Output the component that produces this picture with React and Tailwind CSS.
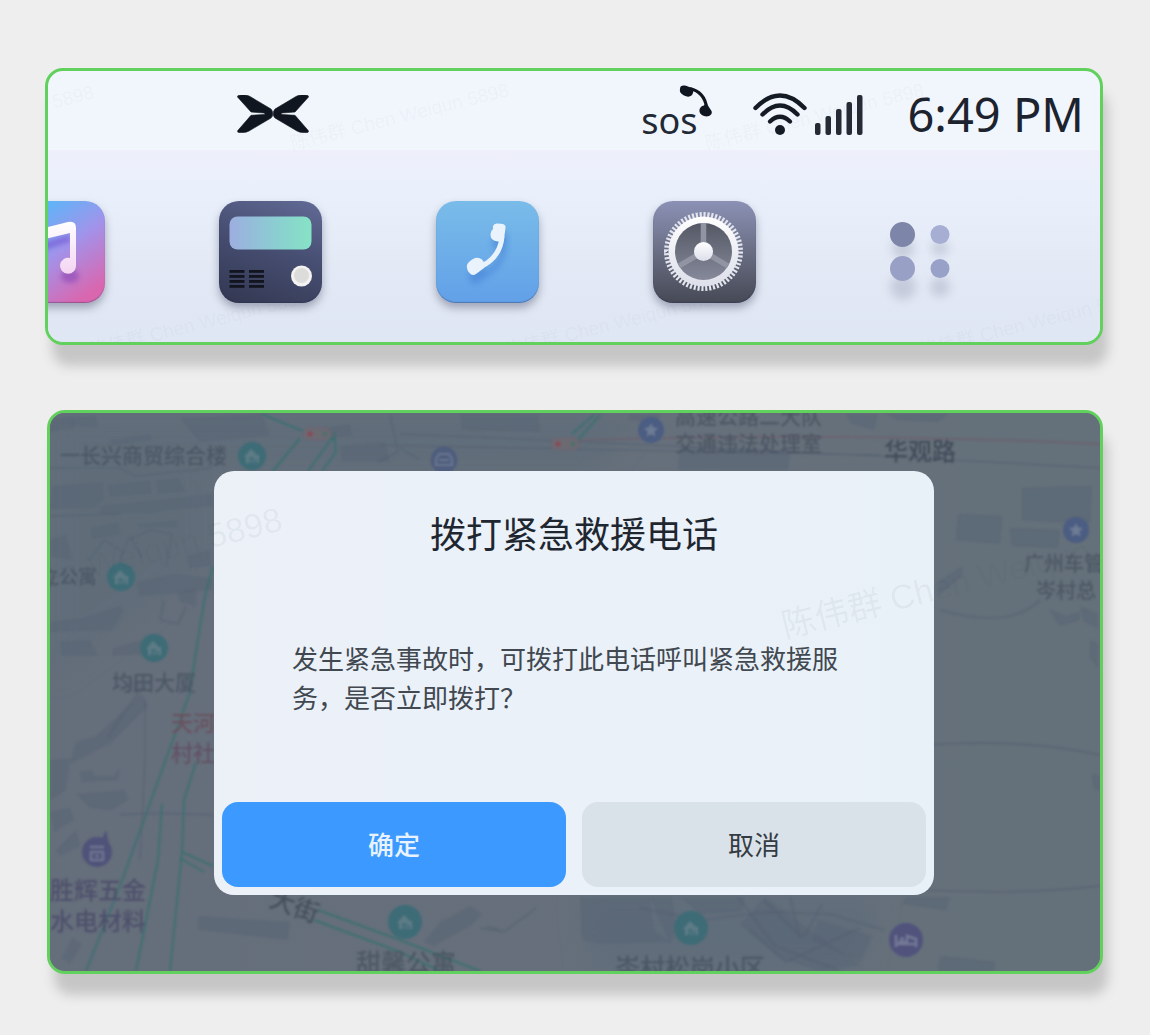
import React from "react";

const WATERMARK = "陈伟群 Chen Weiqun 5898";
const WM_FONT = '"Liberation Sans", "Noto Sans CJK SC", sans-serif';
const CJK = '"Noto Sans CJK SC", sans-serif';

const WING = "M.5 2Q0 0 4 0H8Q11 .3 13 1.500L34 14Q35.800 16 35.800 18.700Q35.800 21.500 34 23L12 36Q9 37.500 6 37.500H2Q0 37.500 .8 35.500L14 20.300L27 19.500Q29 18.700 27 18L14 17Z";

function BrandLogo() {
  return (
    <svg viewBox="0 0 72 38" className="h-[38px] w-[72px]" fill="#10161f" stroke="#10161f" strokeWidth=".6" strokeLinejoin="round" aria-label="XPENG" role="img">
      <path d={WING} />
      <path d={WING} transform="translate(72 0) scale(-1 1)" />
    </svg>
  );
}

function SosHandset() {
  return (
    <svg viewBox="0 0 34 34" className="absolute -right-[15px] -top-[1px] h-[34px] w-[34px]" fill="#10161f" aria-hidden="true">
      <path d="M12 4.500C22 7 27 13 28.500 23" fill="none" stroke="#10161f" strokeWidth="3.200" />
      <path d="M2 5C2 1.500 4.500 1 8 1.800L14 4C16 6 15.500 9.500 13.500 11.500C11.500 13.300 8 13 4.500 10.500C2 9 1.500 7 2 5Z" />
      <path d="M28 18.500L33.500 27C34.500 29.500 33 31.500 30 32.300C26 33 22 30.500 21.500 27.500C21 24.500 23 22 26 21.500Z" />
    </svg>
  );
}

function WifiIcon() {
  return (
    <svg viewBox="0 0 54 42" className="h-[42px] w-[54px]" fill="none" stroke="#151b25" strokeWidth="4.400" strokeLinecap="round" aria-hidden="true">
      <path d="M2.500 15Q27-10 51.500 15" />
      <path d="M9.500 21.500Q27 3.500 44.500 21.500" />
      <path d="M17 28.500Q27 19 37 28.500" />
      <circle cx="27" cy="37" r="5" fill="#151b25" stroke="none" />
    </svg>
  );
}

function SignalIcon() {
  return (
    <svg viewBox="0 0 48 42" className="h-[42px] w-[48px]" fill="#252b35" aria-hidden="true">
      <rect x="0" y="30" width="5.500" height="12" rx="2" />
      <rect x="10.500" y="23" width="5.500" height="19" rx="2" />
      <rect x="21" y="16" width="5.500" height="26" rx="2" />
      <rect x="31.500" y="9" width="5.500" height="33" rx="2" />
      <rect x="42" y="2" width="5.500" height="40" rx="2" />
    </svg>
  );
}

function MusicArt() {
  return (
    <svg viewBox="0 0 103 102" className="h-full w-full" aria-hidden="true">
      <defs>
        <linearGradient id="noteFill" x1="0" y1="0" x2="0" y2="1">
          <stop offset="0" stopColor="#fff" />
          <stop offset="1" stopColor="#f0c9ee" />
        </linearGradient>
        <filter id="noteBlur"><feGaussianBlur stdDeviation="2.500" /></filter>
      </defs>
      <g filter="url(#noteBlur)">
        <path d="M34 48L68 37" stroke="#7048cf" strokeOpacity=".55" strokeWidth="7" fill="none" />
        <ellipse cx="68" cy="75" rx="9" ry="7" fill="#8a42b4" fillOpacity=".6" />
      </g>
      <path d="M30 30L66 21Q74 19.500 74 27V64A8 8 0 1 1 68 57V32L35 40V78A8 8 0 1 1 29 71Z" fill="url(#noteFill)" />
    </svg>
  );
}

function RadioArt() {
  const rows = [69, 74, 79, 84];
  return (
    <svg viewBox="0 0 103 102" className="h-full w-full" aria-hidden="true">
      <defs>
        <linearGradient id="radioScreen" x1="0" y1="0" x2="1" y2="0">
          <stop offset="0" stopColor="#9daee0" />
          <stop offset=".55" stopColor="#8bcdd2" />
          <stop offset="1" stopColor="#86e3c5" />
        </linearGradient>
      </defs>
      <rect x="10.500" y="15.500" width="82" height="33" rx="8" fill="url(#radioScreen)" />
      {rows.map((y) => (
        <g key={y} fill="#12151f">
          <rect x="10.500" y={y} width="15" height="2.800" />
          <rect x="30" y={y} width="15" height="2.800" />
        </g>
      ))}
      <circle cx="82.500" cy="75" r="10.500" fill="#f3f2f0" />
      <circle cx="82.500" cy="74.500" r="7.500" fill="#dcdcda" />
    </svg>
  );
}

function PhoneShape(props) {
  return (
    <g {...props}>
      <path d="M66 35C65 50 57 60 44 66" fill="none" strokeWidth="5" stroke="currentColor" />
      <path d="M57 25Q58 22 62 22.500L67 23Q70 24 69.500 27L68 38Q67 41 62 40.500Q54 40 54.500 33Q54.500 30 57 28Z" fill="currentColor" />
      <path d="M31 64Q32 61 37 58Q42 55.500 46 58.500Q50 63 48 67L40 73Q37 75 34.500 73Q30 69 31 64Z" fill="currentColor" />
    </g>
  );
}

function PhoneArt() {
  return (
    <svg viewBox="0 0 103 102" className="h-full w-full" aria-hidden="true">
      <defs>
        <filter id="softPhone"><feGaussianBlur stdDeviation="3" /></filter>
      </defs>
      <PhoneShape color="#4a86d8" opacity=".7" transform="translate(2 9)" filter="url(#softPhone)" />
      <PhoneShape color="#eaf3fc" />
    </svg>
  );
}

function SettingsArt() {
  return (
    <svg viewBox="0 0 103 102" className="h-full w-full" aria-hidden="true">
      <defs>
        <linearGradient id="gearRing" x1="0" y1="0" x2="0" y2="1">
          <stop offset="0" stopColor="#fff" />
          <stop offset="1" stopColor="#dddfea" />
        </linearGradient>
        <linearGradient id="gearHole" x1="0" y1="0" x2="0" y2="1">
          <stop offset="0" stopColor="#555864" />
          <stop offset="1" stopColor="#85899a" />
        </linearGradient>
      </defs>
      <circle cx="50.500" cy="50.500" r="36.500" fill="none" stroke="#e3e5ee" strokeWidth="6" pathLength="120" strokeDasharray="1.100 .9" />
      <circle cx="50.500" cy="50.500" r="35" fill="url(#gearRing)" />
      <circle cx="50.500" cy="50.500" r="28.500" fill="url(#gearHole)" />
      <path d="M50.500 50V22M50.500 50.500L26 65M50.500 50.500L75 65" stroke="#9194a2" strokeWidth="5.500" />
      <circle cx="50.500" cy="50.500" r="9.500" fill="url(#gearRing)" />
    </svg>
  );
}

function MoreDots() {
  return (
    <svg viewBox="0 0 103 102" className="h-full w-full overflow-visible" aria-hidden="true">
      <defs>
        <filter id="dotBlur" x="-50%" y="-50%" width="200%" height="200%"><feGaussianBlur stdDeviation="5" /></filter>
      </defs>
      <g fill="#8990a5" opacity=".32" filter="url(#dotBlur)">
        <circle cx="33" cy="47" r="11" /><circle cx="70" cy="47" r="8" />
        <circle cx="33" cy="86" r="13" /><circle cx="70" cy="86" r="10" />
      </g>
      <circle cx="32.500" cy="33.500" r="12.500" fill="#7d85a8" />
      <circle cx="70" cy="33.500" r="9.500" fill="#a6afd3" />
      <circle cx="32.500" cy="67.500" r="12.500" fill="#98a1c5" />
      <circle cx="70" cy="67.500" r="9.500" fill="#98a1c8" />
    </svg>
  );
}

const APPS = [
  { name: "音乐", art: <MusicArt />, tile: "bg-[linear-gradient(145deg,#4fbcfb_12%,#a193ea_52%,#d967b0_88%)]" },
  { name: "收音机", art: <RadioArt />, tile: "bg-[linear-gradient(200deg,#626b96,#474f73_45%,#323750)]" },
  { name: "电话", art: <PhoneArt />, tile: "bg-[linear-gradient(180deg,#79bce9,#62a0e8)]" },
  { name: "设置", art: <SettingsArt />, tile: "bg-[linear-gradient(180deg,#8b91b5,#6a6e84_50%,#464955)]" },
];

function Watermark({ x, y, size, anchor = "start", angle = -14 }) {
  return (
    <text x={x} y={y} fontSize={size} textAnchor={anchor} transform={`rotate(${angle} ${x} ${y})`}>
      {WATERMARK}
    </text>
  );
}

function HomePanel() {
  return (
    <section className="relative -ml-0.5 overflow-hidden rounded-[18px] border-[3px] border-[#62d05c] bg-[#f1f6fd] shadow-[6px_22px_12px_-1px_#c6c6c6]">
      <header className="flex h-[79px] items-center pl-[189px] pr-4 pt-1.5">
        <BrandLogo />
        <div className="ml-auto flex items-center">
          <span className="relative mr-[56px] pt-[14px] font-['Noto_Sans'] text-[36px] leading-[44px] text-[#222934]">
            sos
            <SosHandset />
          </span>
          <WifiIcon />
          <span className="ml-2 mr-11"><SignalIcon /></span>
          <time className="font-['Noto_Sans'] text-[47px] leading-[60px] text-[#1d232e]">6:49 PM</time>
        </div>
      </header>
      <nav className="flex gap-[114px] bg-[linear-gradient(180deg,#eeeffb,#e9f0fb_22%,#e3e9f5_60%,#dfe6f4)] pb-[39px] pt-[51px]">
        {APPS.map((app) => (
          <button
            key={app.name}
            type="button"
            aria-label={app.name}
            className={`h-[102px] w-[103px] shrink-0 rounded-[20px] shadow-[0_5px_9px_rgba(60,66,90,0.4),inset_0_-1px_1px_rgba(40,40,80,0.35)] first:-ml-[46px] ${app.tile}`}
          >
            {app.art}
          </button>
        ))}
        <button type="button" aria-label="更多应用" className="h-[102px] w-[103px] shrink-0"><MoreDots /></button>
      </nav>
      <svg viewBox="48 71 1052 271" preserveAspectRatio="xMinYMin slice" className="pointer-events-none absolute inset-0 h-full w-full" fill="#5c6a70" fillOpacity=".055" fontFamily={WM_FONT} aria-hidden="true">
        <Watermark x={95} y={98} size={19} anchor="end" />
        <Watermark x={292} y={150} size={19} />
        <Watermark x={707} y={150} size={19} />
        <Watermark x={91} y={357} size={19} />
        <Watermark x={506} y={357} size={19} />
        <Watermark x={921} y={357} size={19} />
      </svg>
    </section>
  );
}

const BUILDINGS = [
  "50,420 72,416 74,428 50,432", "72,417 96,416 98,427 72,426", "110,440 150,434 152,440 112,446", "180,418 262,414 270,436 200,442",
  "52,486 103,482 104,500 94,508 50,509", "107,485 150,480 152,494 110,497", "156,480 178,478 186,492 158,494",
  "100,506 155,500 212,494 213,506 170,510 150,514 100,514", "90,528 118,522 121,535 92,539", "136,524 176,520 178,528 140,528",
  "50,540 66,535 72,560 50,556", "136,582 175,574 213,578 213,590 140,596", "178,592 196,588 196,606 180,602",
  "50,622 82,618 120,606 124,610 112,630 50,632", "60,642 90,640 98,656 62,656", "113,648 142,640 148,654 112,656",
  "128,678 142,684 138,694 124,690", "96,736 142,694 148,706 112,742 70,764 76,742", "80,772 92,770 94,776 114,776 120,768 118,780 82,782",
  "50,760 70,758 66,790 50,800", "76,794 124,790 128,800 112,810 90,808", "50,812 70,808 74,820 54,832", "56,850 76,830 80,846 60,856",
  "198,916 290,922 288,940 198,930", "460,414 538,414 540,432 462,430", "340,446 385,442 390,462 342,462",
  "680,446 790,452 788,470 678,470", "630,414 660,414 658,422 628,420", "846,414 878,414 874,430 852,424", "886,414 948,414 938,422 896,420",
  "1022,488 1092,486 1090,524 1022,520", "958,514 1002,516 1000,544 956,540", "1010,528 1060,530 1058,548 1012,546",
  "938,582 963,566 962,576 938,596", "1050,610 1066,616 1080,612 1080,620 1060,626", "1080,606 1098,614 1098,628 1084,622",
  "1090,640 1098,644 1098,668 1090,658", "1092,774 1100,776 1100,792 1094,788", "440,922 470,906 482,914 470,926 434,946 424,942",
  "580,897 650,897 654,930 670,942 600,944 582,940", "650,897 672,897 676,928 670,944", "680,897 745,897 742,912 700,914",
  "765,897 810,930 860,965 820,971 780,958 740,924", "818,920 872,936 860,962 812,940", "906,897 950,897 946,910 902,904",
  "940,956 995,962 994,971 938,971", "72,938 82,944 70,964 62,958", "310,430 350,424 352,436 312,440", "186,556 210,550 212,566 190,568",
];

const ALLEYS = [
  "M112 582L128 540L150 530L172 534L166 566", "M130 536L142 558", "M164 600L160 620L178 624L186 606", "M90 560L104 540L124 552",
  "M50 468H120L136 476L212 468", "M50 516L120 514", "M390 415L398 452L378 462", "M400 448L420 460", "M108 738Q130 700 150 682",
  "M480 928L504 932L536 908", "M500 930L486 926", "M764 900L800 936L806 934L822 904", "M750 930L786 962L860 928", "M738 897L775 946L840 971",
  "M790 897L800 938", "M640 908L700 920L770 912L830 914L884 930", "M120 815Q150 812 213 815",
  "M940 610Q1010 630 1040 600",
];

const ROADS = [
  "M213 566L205 596Q196 650 190 692L170 748L120 886L86 971", "M196 762L184 800L182 852L170 971", "M162 804L158 860L136 971",
  "M182 852L213 866", "M180 858L204 872", "M318 910L400 940L480 971", "M314 920L400 952L440 971",
  "M273 471L300 438", "M308 471L332 438", "M322 471L336 452L334 432", "M262 414L300 430L336 440", "M572 434L594 415", "M578 440L600 415",
];

const LABELS = [
  { t: "一", x: 60, y: 463, s: 20 }, { t: "长兴商贸综合楼", x: 80, y: 463, s: 21 },
  { t: "立公寓", x: 40, y: 584, s: 19 }, { t: "均田大厦", x: 112, y: 690, s: 21 },
  { t: "天河", x: 171, y: 731, s: 22, c: "#6b4c5a" }, { t: "村社", x: 171, y: 761, s: 22, c: "#624e60" },
  { t: "胜辉五金", x: 50, y: 899, s: 24, c: "#4a4b69" }, { t: "水电材料", x: 50, y: 930, s: 24, c: "#4a4b69" },
  { t: "甜馨公寓", x: 356, y: 972, s: 25 }, { t: "岑村松岗小区", x: 615, y: 977, s: 25 },
  { t: "高速公路二大队", x: 675, y: 424, s: 21 }, { t: "交通违法处理室", x: 675, y: 451, s: 21 },
  { t: "华观路", x: 884, y: 460, s: 24, c: "#3a4452" }, { t: "广州车管", x: 1024, y: 571, s: 20 }, { t: "岑村总", x: 1036, y: 598, s: 20 },
];

function HousePin({ x, y, r = 14 }) {
  return (
    <g transform={`translate(${x} ${y})`}>
      <circle r={r} fill="#3c6c77" />
      <path d="M-8 1L-1-7L4-2V-1H7V7H-6V1Z" fill="#5d7c86" />
      <path d="M-2 7V2H1V7M4 7V3" stroke="#3c6c77" strokeWidth="1.500" fill="none" />
    </g>
  );
}

function StarPin({ x, y }) {
  return (
    <g transform={`translate(${x} ${y})`}>
      <circle r="13" fill="#4b5d82" />
      <path d="M0-7L2-2.500L7-2L3.300 1.500L4.300 6.500L0 4L-4.300 6.500L-3.300 1.500L-7-2L-2-2.500Z" fill="#6d7b94" />
    </g>
  );
}

function MapBackdrop() {
  return (
    <svg viewBox="50 413 1050 558" preserveAspectRatio="xMidYMid slice" className="absolute inset-0 h-full w-full" aria-hidden="true">
      <defs>
        <linearGradient id="land" x1="0" y1="0" x2="1" y2="0">
          <stop offset="0" stopColor="#656e7b" />
          <stop offset=".75" stopColor="#66707b" />
          <stop offset=".88" stopColor="#64707a" />
        </linearGradient>
        <filter id="mapSoft"><feGaussianBlur stdDeviation=".9" /></filter>
        <filter id="patchSoft"><feGaussianBlur stdDeviation="12" /></filter>
      </defs>
      <rect x="50" y="413" width="1050" height="558" fill="url(#land)" />
      <g filter="url(#patchSoft)">
        <path d="M50 413H640L600 471H214V560L50 680Z" fill="#616d79" />
        <path d="M580 897H880L860 971H590Z" fill="#616d7a" />
      </g>
      <g filter="url(#mapSoft)">
        <g fill="#566274" fillOpacity=".5">
          {BUILDINGS.map((points) => <polygon key={points} points={points} />)}
        </g>
        <g fill="none" stroke="#535f70" strokeWidth="2" strokeOpacity=".5">
          {ALLEYS.map((d) => <path key={d} d={d} />)}
        </g>
        <g fill="none" stroke="#566172" strokeWidth="1">
          <path d="M145 700V760L140 860" /><path d="M400 434Q700 446 1100 468" /><path d="M380 445Q700 452 880 455" />
        </g>
        <g fill="none" stroke="#5b6774" strokeWidth="2">
          <path d="M925 745Q1020 738 1100 755" /><path d="M925 890Q1020 895 1100 886" />
        </g>
        <path d="M580 440Q840 432 1100 444" fill="none" stroke="#6c606c" strokeWidth="1.500" />
        <g fill="none" stroke="#36716e" strokeWidth="2" strokeOpacity=".8">
          {ROADS.map((d) => <path key={d} d={d} />)}
        </g>
        {[[317, 434], [565, 444]].map(([x, y]) => (
          <g key={x} transform={`translate(${x} ${y})`}>
            <rect x="-14" y="-6" width="28" height="12" rx="6" fill="#6b6a74" stroke="#745f69" strokeOpacity=".7" />
            <circle cx="-7" r="3" fill="#834f59" /><circle r="2" fill="#706c68" /><circle cx="8" r="2.500" fill="#506f6b" />
          </g>
        ))}
        <HousePin x={252} y={456} /><HousePin x={121} y={577} /><HousePin x={154} y={648} />
        <HousePin x={405} y={922} r={17} /><HousePin x={691} y={928} r={17} />
        <StarPin x={651} y={430} /><StarPin x={1076} y={530} />
        <g transform="translate(444 460)">
          <circle r="13.500" fill="#505d7e" />
          <path d="M-8 5V-1L-5-6H5L8-1V5ZM-5 0H5" fill="none" stroke="#68758f" strokeWidth="2" />
        </g>
        <g transform="translate(97 852)">
          <circle r="15" fill="#4f5279" /><path d="M5-13L9-22L12-8Z" fill="#4f5279" />
          <path d="M-7-5H7M-7 0H7M-6 0V8H6V0M-2 4H2" fill="none" stroke="#6c7390" strokeWidth="2.500" />
        </g>
        <g transform="translate(906 940)">
          <circle r="17" fill="#51537d" />
          <path d="M-10-5V7M-10 4H10V7M10 4V-1L1-4V3M-8 2H0" fill="none" stroke="#727894" strokeWidth="2.500" />
          <circle cx="-4" cy="-1" r="2" fill="#727894" />
        </g>
        <g fontFamily={CJK} fontWeight="500" fill="#475260" opacity=".82">
          {LABELS.map((l) => <text key={l.t} x={l.x} y={l.y} fontSize={l.s} fill={l.c}>{l.t}</text>)}
          <text x="268" y="906" fontSize="25" fill="#3f4a57" transform="rotate(20 268 906)">大街</text>
        </g>
      </g>
    </svg>
  );
}

function CallPanel() {
  return (
    <section className="relative overflow-hidden rounded-[18px] border-[3px] border-[#62d05c] bg-[#64707b] pb-[76px] pl-[164px] pr-[166px] pt-[58px] shadow-[6px_22px_12px_-1px_#c6c6c6]">
      <MapBackdrop />
      <div role="dialog" aria-labelledby="call-title" aria-describedby="call-text" className="relative rounded-[20px] bg-[linear-gradient(90deg,#ecf1f8,#e9f1f8)] p-2 font-['Noto_Sans_CJK_SC',sans-serif]">
        <h1 id="call-title" className="pt-[27px] text-center text-[36px] font-normal leading-[52px] text-[#202630]">拨打紧急救援电话</h1>
        <p id="call-text" className="mt-[80px] min-h-[164px] pl-[70px] pr-[68px] text-[26px] leading-[39px] text-[#414850]">
          发生紧急事故时，可拨打此电话呼叫紧急救援服<wbr />务，是否立即拨打？
        </p>
        <div className="grid grid-cols-2 gap-4">
          <button type="button" className="h-[85px] rounded-[16px] bg-[#3b99ff] pb-0.5 text-[26px] font-medium text-[#e8f3ff]">确定</button>
          <button type="button" className="h-[85px] rounded-[16px] bg-[#dae2e9] pb-0.5 text-[26px] text-[#343b43]">取消</button>
        </div>
      </div>
      <svg viewBox="50 413 1050 558" preserveAspectRatio="xMidYMid slice" className="pointer-events-none absolute inset-0 h-full w-full" fill="#46555c" fillOpacity=".07" fontFamily={WM_FONT} aria-hidden="true">
        <Watermark x={284} y={530} size={34} anchor="end" />
        <Watermark x={785} y={638} size={34} />
      </svg>
    </section>
  );
}

export default function App() {
  return (
    <main className="flex min-h-screen flex-col gap-[65px] bg-[#eeeeee] px-[47px] pb-[61px] pt-[68px]">
      <HomePanel />
      <CallPanel />
    </main>
  );
}
